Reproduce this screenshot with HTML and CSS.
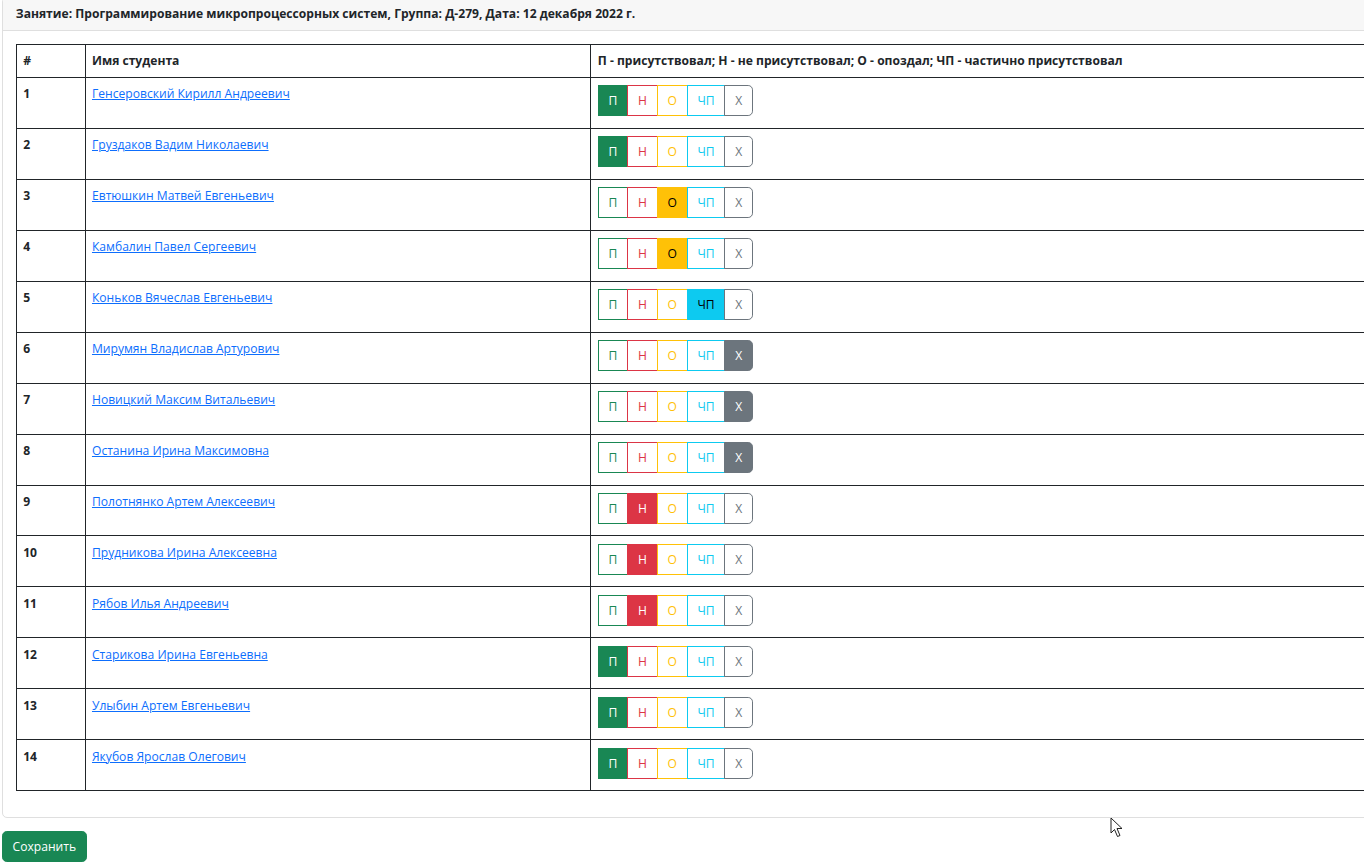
FILE: index.html
```html
<!DOCTYPE html>
<html lang="ru">
<head>
<meta charset="utf-8">
<title>Посещаемость</title>
<link rel="stylesheet" href="styles.css">
</head>
<body>
<div class="page">
  <div class="card">
    <div class="card-header">Занятие: Программирование микропроцессорных систем, Группа: Д-279, Дата: 12 декабря 2022 г.</div>
    <div class="card-body">
      <table class="table">
        <thead>
          <tr><th class="c-num">#</th><th class="c-name">Имя студента</th><th class="c-mark">П - присутствовал; Н - не присутствовал; О - опоздал; ЧП - частично присутствовал</th></tr>
        </thead>
        <tbody>
          <tr><td class="num">1</td><td><a href="#">Генсеровский Кирилл Андреевич</a></td><td><div class="btn-group"><span class="btn g on">П</span><span class="btn r">Н</span><span class="btn y">О</span><span class="btn c">ЧП</span><span class="btn s">Х</span></div></td></tr>
          <tr><td class="num">2</td><td><a href="#">Груздаков Вадим Николаевич</a></td><td><div class="btn-group"><span class="btn g on">П</span><span class="btn r">Н</span><span class="btn y">О</span><span class="btn c">ЧП</span><span class="btn s">Х</span></div></td></tr>
          <tr><td class="num">3</td><td><a href="#">Евтюшкин Матвей Евгеньевич</a></td><td><div class="btn-group"><span class="btn g">П</span><span class="btn r">Н</span><span class="btn y on">О</span><span class="btn c">ЧП</span><span class="btn s">Х</span></div></td></tr>
          <tr><td class="num">4</td><td><a href="#">Камбалин Павел Сергеевич</a></td><td><div class="btn-group"><span class="btn g">П</span><span class="btn r">Н</span><span class="btn y on">О</span><span class="btn c">ЧП</span><span class="btn s">Х</span></div></td></tr>
          <tr><td class="num">5</td><td><a href="#">Коньков Вячеслав Евгеньевич</a></td><td><div class="btn-group"><span class="btn g">П</span><span class="btn r">Н</span><span class="btn y">О</span><span class="btn c on">ЧП</span><span class="btn s">Х</span></div></td></tr>
          <tr><td class="num">6</td><td><a href="#">Мирумян Владислав Артурович</a></td><td><div class="btn-group"><span class="btn g">П</span><span class="btn r">Н</span><span class="btn y">О</span><span class="btn c">ЧП</span><span class="btn s on">Х</span></div></td></tr>
          <tr><td class="num">7</td><td><a href="#">Новицкий Максим Витальевич</a></td><td><div class="btn-group"><span class="btn g">П</span><span class="btn r">Н</span><span class="btn y">О</span><span class="btn c">ЧП</span><span class="btn s on">Х</span></div></td></tr>
          <tr><td class="num">8</td><td><a href="#">Останина Ирина Максимовна</a></td><td><div class="btn-group"><span class="btn g">П</span><span class="btn r">Н</span><span class="btn y">О</span><span class="btn c">ЧП</span><span class="btn s on">Х</span></div></td></tr>
          <tr><td class="num">9</td><td><a href="#">Полотнянко Артем Алексеевич</a></td><td><div class="btn-group"><span class="btn g">П</span><span class="btn r on">Н</span><span class="btn y">О</span><span class="btn c">ЧП</span><span class="btn s">Х</span></div></td></tr>
          <tr><td class="num">10</td><td><a href="#">Прудникова Ирина Алексеевна</a></td><td><div class="btn-group"><span class="btn g">П</span><span class="btn r on">Н</span><span class="btn y">О</span><span class="btn c">ЧП</span><span class="btn s">Х</span></div></td></tr>
          <tr><td class="num">11</td><td><a href="#">Рябов Илья Андреевич</a></td><td><div class="btn-group"><span class="btn g">П</span><span class="btn r on">Н</span><span class="btn y">О</span><span class="btn c">ЧП</span><span class="btn s">Х</span></div></td></tr>
          <tr><td class="num">12</td><td><a href="#">Старикова Ирина Евгеньевна</a></td><td><div class="btn-group"><span class="btn g on">П</span><span class="btn r">Н</span><span class="btn y">О</span><span class="btn c">ЧП</span><span class="btn s">Х</span></div></td></tr>
          <tr><td class="num">13</td><td><a href="#">Улыбин Артем Евгеньевич</a></td><td><div class="btn-group"><span class="btn g on">П</span><span class="btn r">Н</span><span class="btn y">О</span><span class="btn c">ЧП</span><span class="btn s">Х</span></div></td></tr>
          <tr><td class="num">14</td><td><a href="#">Якубов Ярослав Олегович</a></td><td><div class="btn-group"><span class="btn g on">П</span><span class="btn r">Н</span><span class="btn y">О</span><span class="btn c">ЧП</span><span class="btn s">Х</span></div></td></tr>
        </tbody>
      </table>
    </div>
  </div>
  <button class="save" type="button">Сохранить</button>
</div>
<svg class="cursor" width="14" height="22" viewBox="0 0 14 22"><path d="M1 1 L1 16 L4.5 12.5 L7.5 19.5 L10 18.5 L7 11.5 L12 11.5 Z" fill="#fff" stroke="#222" stroke-width="1"/></svg>
</body>
</html>
```
FILE: styles.css
```css
html, body {
  margin: 0;
  padding: 0;
  overflow: hidden;
  background: #fff;
}
body {
  font-family: "Open Sans", "Noto Sans", sans-serif;
  font-size: 12.1px;
  line-height: 19.2px;
  color: #212529;
  position: relative;
  height: 868px;
}
.page {
  padding-left: 2px;
  margin-top: -3px;
  width: 1480px;
}
.card {
  border: 1px solid #dfdfdf;
  border-radius: 5px;
  background: #fff;
}
.card-header {
  background: #f7f7f7;
  border-bottom: 1px solid #dfdfdf;
  padding: 6.4px 12.8px;
  font-weight: 700;
  border-radius: 5px 5px 0 0;
}
.card-body {
  padding: 12.8px;
}
.table {
  width: 100%;
  border-collapse: collapse;
  margin-bottom: 12.8px;
}
.table th, .table td {
  border: 1px solid #212529;
  padding: 6.4px;
  text-align: left;
  vertical-align: top;
}
.table th {
  font-weight: 700;
}
.c-num { width: 55px; }
.c-name { width: 492px; }
.num { font-weight: 700; padding-left: 8px; }
.table a {
  color: #0d6efd;
  text-decoration: underline;
}
.btn-group {
  display: flex;
  margin-top: 1px;
  margin-bottom: 5.4px;
}
.btn {
  display: block;
  padding: 4.8px 9.8px;
  border: 1px solid;
  line-height: 19.2px;
  font-size: 12.1px;
  background: transparent;
  margin-left: -1px;
}
.btn:first-child { margin-left: 0; }
.btn:last-child { border-radius: 0 4.8px 4.8px 0; }
.g { color: #198754; border-color: #198754; }
.r { color: #dc3545; border-color: #dc3545; }
.y { color: #ffc107; border-color: #ffc107; }
.c { color: #0dcaf0; border-color: #0dcaf0; }
.s { color: #6c757d; border-color: #6c757d; }
.g.on { background: #198754; color: #fff; }
.r.on { background: #dc3545; color: #fff; }
.y.on { background: #ffc107; color: #000; }
.c.on { background: #0dcaf0; color: #000; }
.s.on { background: #6c757d; color: #fff; }
.save {
  margin-top: 12.8px;
  font-family: inherit;
  font-size: 12.1px;
  line-height: 19.2px;
  padding: 4.8px 9.6px;
  background: #198754;
  color: #fff;
  border: 1px solid #198754;
  border-radius: 4.8px;
}
.cursor {
  position: absolute;
  left: 1110px;
  top: 817px;
}
```
